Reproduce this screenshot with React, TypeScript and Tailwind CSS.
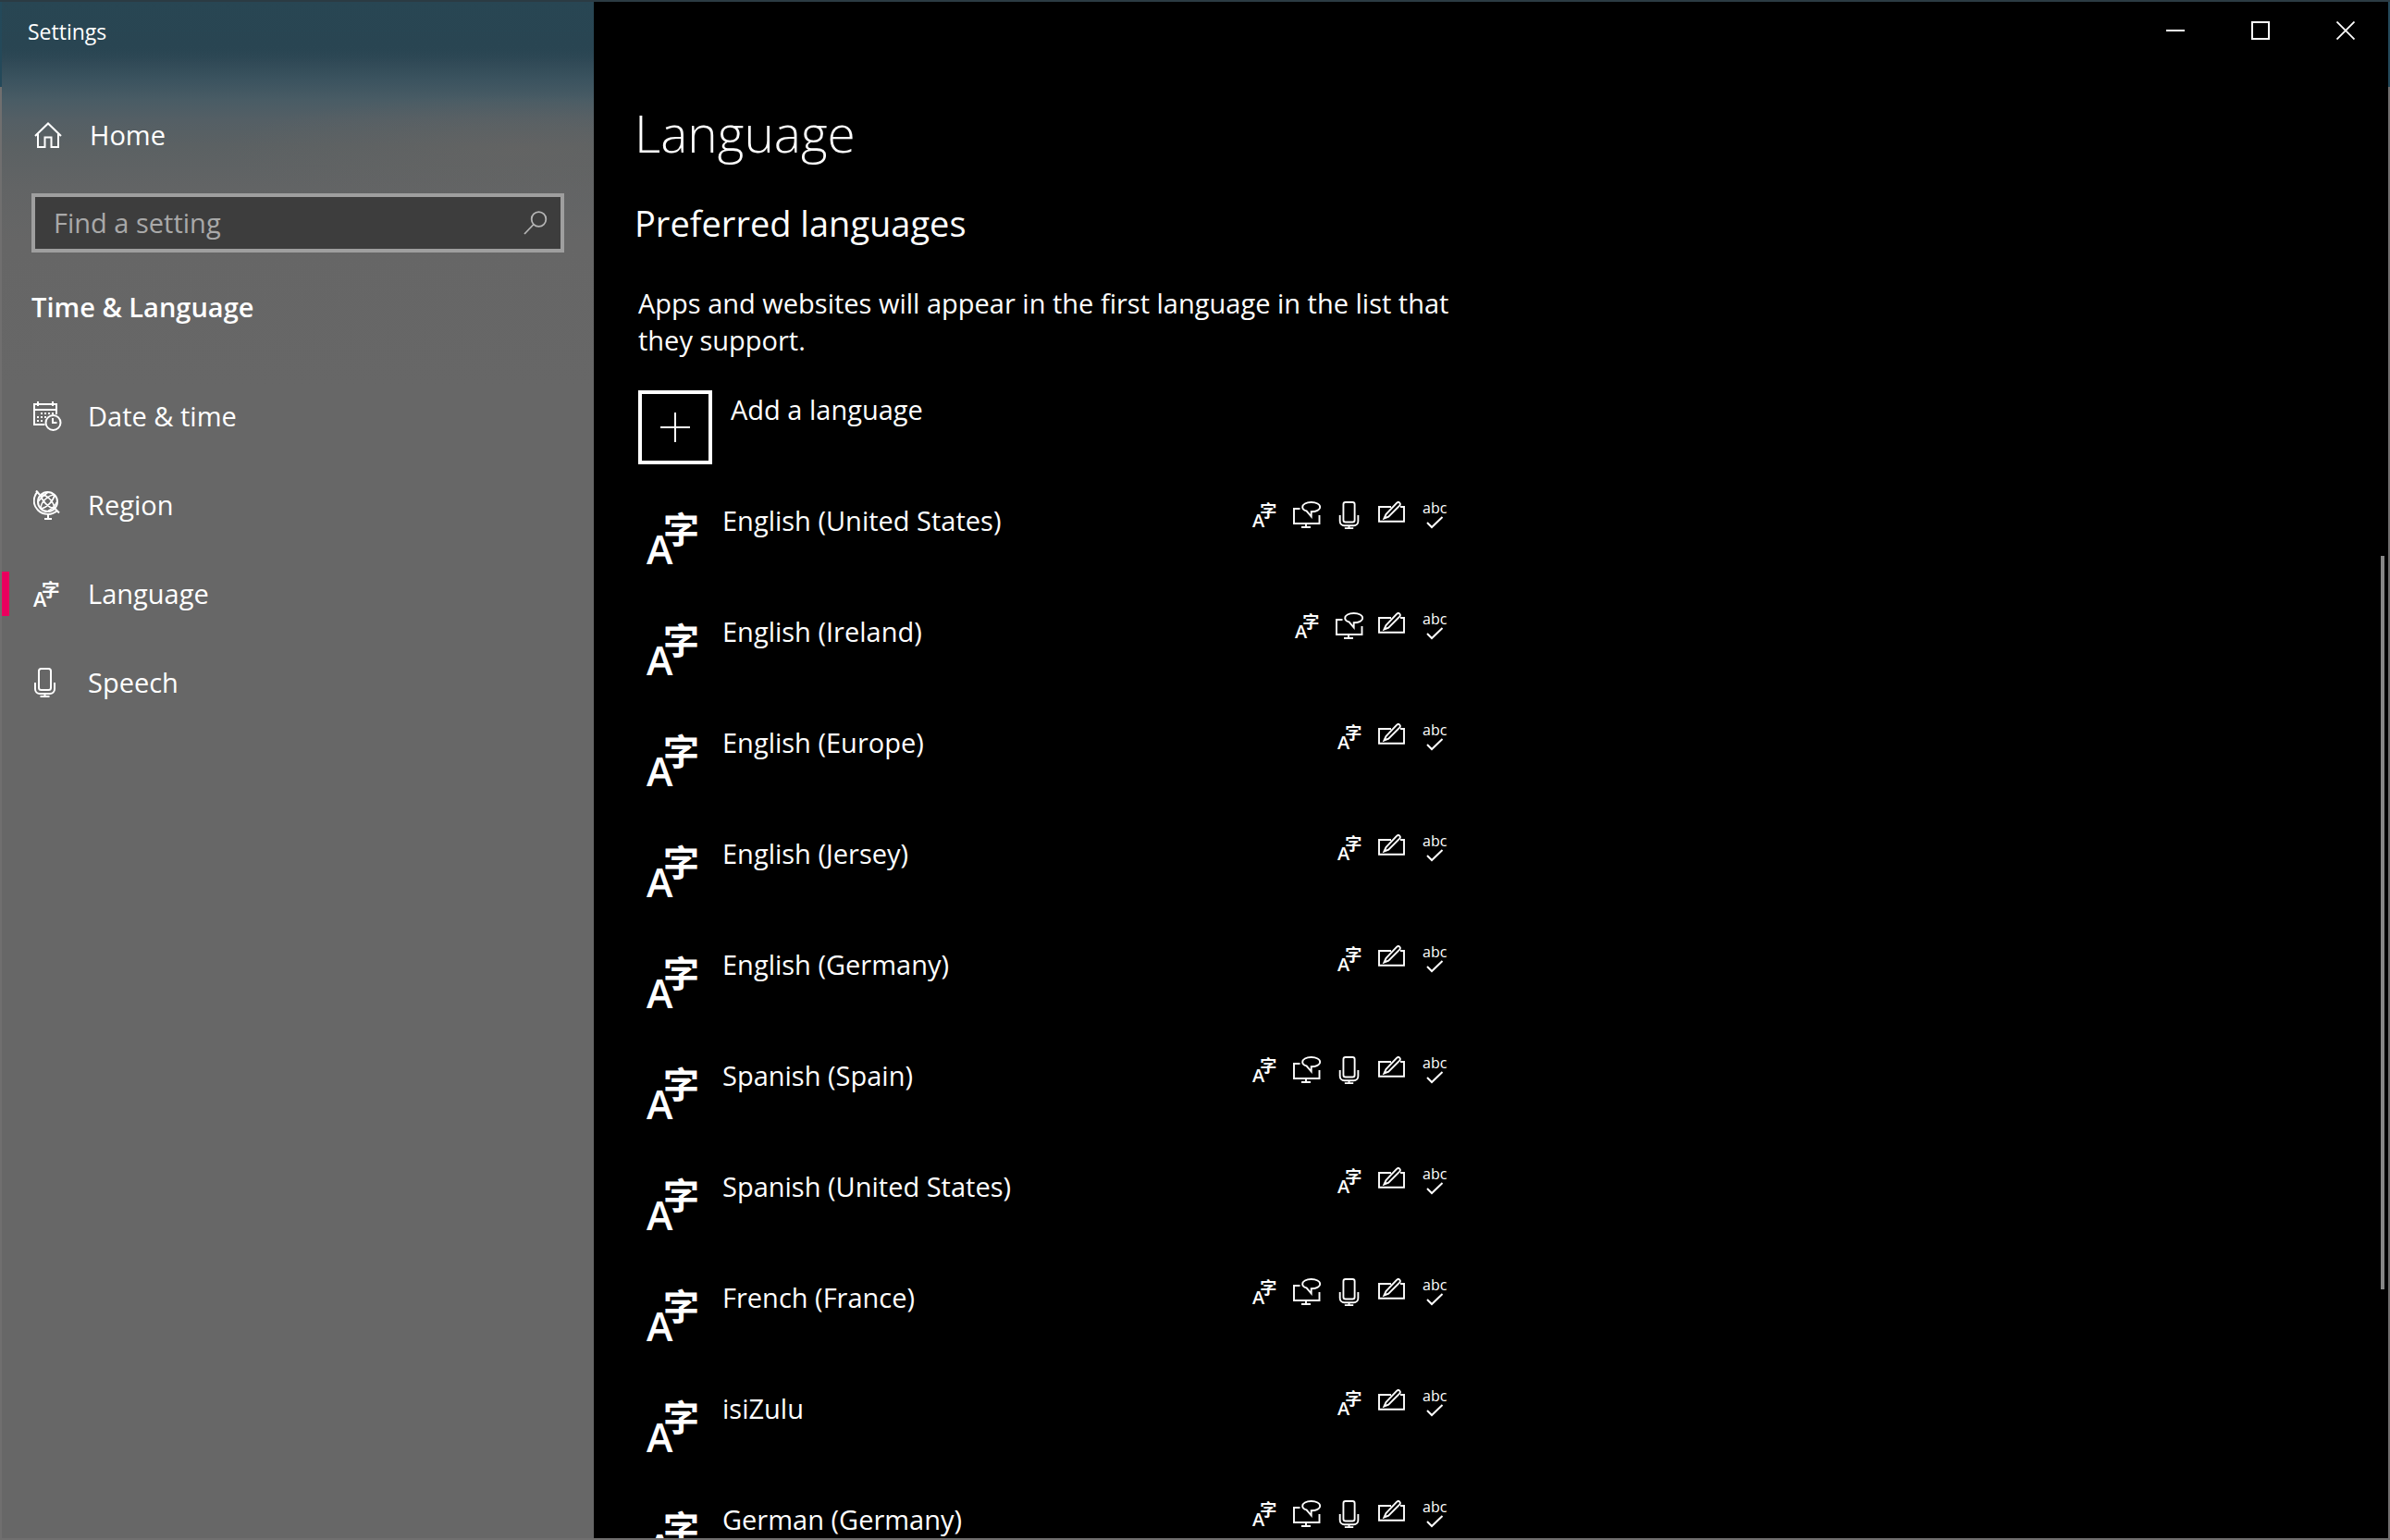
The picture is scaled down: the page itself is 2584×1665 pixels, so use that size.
import React, { useState } from 'react';

type Feature = 'display' | 'tts' | 'speech' | 'handwriting' | 'spelling';

interface Language {
  name: string;
  features: Feature[];
}

const ALL: Feature[] = ['display', 'tts', 'speech', 'handwriting', 'spelling'];
const BASIC: Feature[] = ['display', 'handwriting', 'spelling'];

const languages: Language[] = [
  { name: 'English (United States)', features: ALL },
  { name: 'English (Ireland)', features: ['display', 'tts', 'handwriting', 'spelling'] },
  { name: 'English (Europe)', features: BASIC },
  { name: 'English (Jersey)', features: BASIC },
  { name: 'English (Germany)', features: BASIC },
  { name: 'Spanish (Spain)', features: ALL },
  { name: 'Spanish (United States)', features: BASIC },
  { name: 'French (France)', features: ALL },
  { name: 'isiZulu', features: BASIC },
  { name: 'German (Germany)', features: ALL },
];

function LanguageIcon({ className }: { className: string }) {
  return (
    <svg viewBox="0 0 56 56" fill="currentColor" className={`shrink-0 overflow-visible ${className}`} aria-hidden="true">
      <text x="0" y="56" fontSize="43" className="font-semibold">
        A
      </text>
      <text x="18" y="33" fontSize="39" className="font-['Noto_Sans_CJK_SC',sans-serif] font-bold">
        字
      </text>
    </svg>
  );
}

function HomeIcon() {
  return (
    <svg viewBox="0 0 30 28" className="h-7 w-[30px]" fill="none" stroke="currentColor" strokeWidth="2" aria-hidden="true">
      <path d="M1 15 15 1.500 29 15" />
      <path d="M4 12.500V27h7.500V16.500h7V27H26V12.500" />
    </svg>
  );
}

function SearchIcon() {
  return (
    <svg viewBox="0 0 26 26" className="size-[26px]" fill="none" stroke="currentColor" strokeWidth="1.800" aria-hidden="true">
      <circle cx="16.500" cy="9" r="7.800" />
      <path d="M11 14.500 1 25" />
    </svg>
  );
}

function DateIcon() {
  return (
    <svg viewBox="0 0 32 32" className="size-8" fill="none" stroke="currentColor" strokeWidth="2" aria-hidden="true">
      <path d="M12.500 25H1V3h24v11M1 9h24M5 0v5M21 0v5" />
      <path d="M8 13h2M12 13h2M16 13h2M20 13h2M4 17h2M8 17h2M12 17h2M4 21h2M8 21h2" />
      <circle cx="21.500" cy="23" r="8" />
      <path d="M21 18v5h4.500" />
    </svg>
  );
}

function RegionIcon() {
  return (
    <svg viewBox="0 0 32 32" className="size-8" fill="none" stroke="currentColor" strokeWidth="2" aria-hidden="true">
      <circle cx="15.500" cy="12.500" r="10.500" />
      <path d="M5 1C-1 8-.5 16 5 21.500s15 6 21 .5M3 .5 7 5M23.500 20l4.500 4.500M16 26v4.500M12 31h8" />
      <path
        d="M8 5c1 6 8 14 15 15M23 5C22 11 15 19 8 20M8 5c5-1 14 6 15 15M23 5C17 5 8 12 8 20M5.500 12c2-3 6-7 10-9.500M26 12c-2 4-6 8-10 10.500"
        strokeWidth="1.600"
      />
    </svg>
  );
}

function MicIcon({ className }: { className: string }) {
  return (
    <svg viewBox="0 0 30 32" className={className} fill="none" stroke="currentColor" strokeWidth="2" aria-hidden="true">
      <rect x="8" y="1" width="13" height="23" rx="2.500" />
      <path d="M4 16v7a5 5 0 0 0 5 5h11a5 5 0 0 0 5-5v-7M14.500 28v3M9.500 31h10" />
    </svg>
  );
}

function TtsIcon() {
  return (
    <svg viewBox="0 0 30 30" className="size-[30px]" fill="none" stroke="currentColor" strokeWidth="1.900" aria-hidden="true">
      <path d="M7.500 8H1v16h27.500v-9M14 24v4M9 28h10" />
      <path d="M14.500 10.400C11.500 9.500 10.200 8 10.200 6.200c0-3 4-5.200 9.500-5.200s9.500 2.200 9.500 5.200-4 5.100-9.500 5.100V16.500z" />
    </svg>
  );
}

function PenIcon() {
  return (
    <svg viewBox="0 0 30 30" className="size-[30px]" fill="none" stroke="currentColor" strokeWidth="1.900" aria-hidden="true">
      <path d="M14 6H1v15.800h27V6h-4" />
      <path d="M6.500 18.500 8.500 14 20 1.800c1-1 2.300-1 3.200-.2s.9 2 0 3L11.200 16.600z" />
    </svg>
  );
}

function SpellingIcon() {
  return (
    <svg viewBox="0 0 30 30" className="size-[30px] overflow-visible" aria-hidden="true">
      <text x="2" y="13" fontSize="16" fill="currentColor">
        abc
      </text>
      <path d="M7 23 12 28 23.500 17" fill="none" stroke="currentColor" strokeWidth="2" />
    </svg>
  );
}

function FeatureIcon({ feature }: { feature: Feature }) {
  if (feature === 'display') {
    return (
      <span className="flex size-[30px] items-center justify-center">
        <LanguageIcon className="size-[26px]" />
      </span>
    );
  }
  if (feature === 'tts') return <TtsIcon />;
  if (feature === 'speech') return <MicIcon className="size-[30px]" />;
  if (feature === 'handwriting') return <PenIcon />;
  return <SpellingIcon />;
}

const navItems = [
  { label: 'Date & time', icon: <DateIcon /> },
  { label: 'Region', icon: <RegionIcon /> },
  { label: 'Language', icon: <LanguageIcon className="size-7" /> },
  { label: 'Speech', icon: <MicIcon className="-ml-0.5 h-8 w-[30px]" /> },
];

function Sidebar() {
  const [active, setActive] = useState('Language');
  const [query, setQuery] = useState('');

  return (
    <aside className="w-[640px] shrink-0 bg-[radial-gradient(ellipse_320px_60px_at_560px_160px,#67656399_0%,#67656300_100%),linear-gradient(180deg,#284653_0px,#294552_46px,#30495600_66px),linear-gradient(180deg,#294552_46px,#314a57_66px,#3b535f_84px,#495c65_106px,#545f65_128px,#5b6163_155px,#626465_200px,#666666_260px,#676767_420px)]">
      <div className="px-7 pt-4 text-[23px] leading-8">Settings</div>

      <a href="#home" className="mt-[76px] flex h-10 items-center gap-[30px] px-[35px]">
        <HomeIcon />
        <span className="leading-10">Home</span>
      </a>

      <label className="mx-8 mt-[43px] flex h-16 items-center border-4 border-[#9f9f9f] bg-[#3d3d3d] pr-[14px] pl-5">
        <input
          type="text"
          aria-label="Find a setting"
          placeholder="Find a setting"
          value={query}
          onChange={(e) => setQuery(e.target.value)}
          className="min-w-0 flex-1 bg-transparent leading-10 outline-none placeholder:text-[#a9a9a9]"
        />
        <span className="text-[#b4b4b4]">
          <SearchIcon />
        </span>
      </label>

      <h2 className="mt-[39px] px-8 leading-10 font-semibold">Time &amp; Language</h2>

      <nav className="mt-[50px]">
        {navItems.map((item) => (
          <a
            key={item.label}
            href="#"
            aria-current={active === item.label ? 'page' : undefined}
            onClick={() => setActive(item.label)}
            className="flex h-24 items-center"
          >
            <span className={`h-12 w-2 ${active === item.label ? 'bg-[#ea005e]' : ''}`} />
            <span className="ml-[26px] flex w-[59px] items-center">{item.icon}</span>
            <span className="leading-10">{item.label}</span>
          </a>
        ))}
      </nav>
    </aside>
  );
}

function WindowControls() {
  return (
    <div className="flex h-[62px] shrink-0 justify-end">
      <button type="button" aria-label="Minimize" className="flex w-[92px] items-center justify-center">
        <span className="h-0.5 w-5 bg-white" />
      </button>
      <button type="button" aria-label="Maximize" className="flex w-[92px] items-center justify-center">
        <span className="size-5 border-2 border-white" />
      </button>
      <button type="button" aria-label="Close" className="flex w-[92px] items-center justify-center">
        <svg viewBox="0 0 20 20" className="size-5" stroke="currentColor" strokeWidth="1.800" aria-hidden="true">
          <path d="M.5.5l19 19M19.500.5l-19 19" />
        </svg>
      </button>
    </div>
  );
}

export default function App() {
  return (
    <div className="flex h-screen overflow-hidden bg-[linear-gradient(180deg,#2b3b43_2px,#24495a_2px,#24495a_94px,#706f6f_94px)] p-0.5 font-['Open_Sans','Noto_Sans',sans-serif] text-[29px] text-white">
      <Sidebar />

      <main className="relative flex min-w-0 flex-1 flex-col bg-black">
        <WindowControls />

        <div className="min-h-0 flex-1 overflow-hidden pl-12">
          <h1 className="mt-11 -ml-1 text-[55px] leading-[72px] font-light">Language</h1>
          <h2 className="mt-[37px] -ml-1 text-[38px] leading-[48px]">Preferred languages</h2>
          <p className="mt-[43px] max-w-[900px] leading-10">
            Apps and websites will appear in the first language in the list that they support.
          </p>

          <button type="button" className="mt-[34px] flex items-start gap-5 text-left">
            <span className="flex size-20 items-center justify-center border-4 border-white">
              <svg viewBox="0 0 32 32" className="size-8" stroke="currentColor" strokeWidth="2" aria-hidden="true">
                <path d="M16 0v32M0 16h32" />
              </svg>
            </span>
            <span className="leading-[42px]">Add a language</span>
          </button>

          <ul className="mt-7 max-w-[876px]">
            {languages.map((lang) => (
              <li key={lang.name} className="flex h-[120px] items-start pt-3 pl-[9px]">
                <LanguageIcon className="mt-3 size-14" />
                <span className="ml-[26px] leading-[42px]">{lang.name}</span>
                <span className="ml-auto flex gap-4">
                  {lang.features.map((feature) => (
                    <FeatureIcon key={feature} feature={feature} />
                  ))}
                </span>
              </li>
            ))}
          </ul>
        </div>

        <div className="absolute top-[599px] right-1 h-[793px] w-1 bg-[#868686]" />
      </main>
    </div>
  );
}
